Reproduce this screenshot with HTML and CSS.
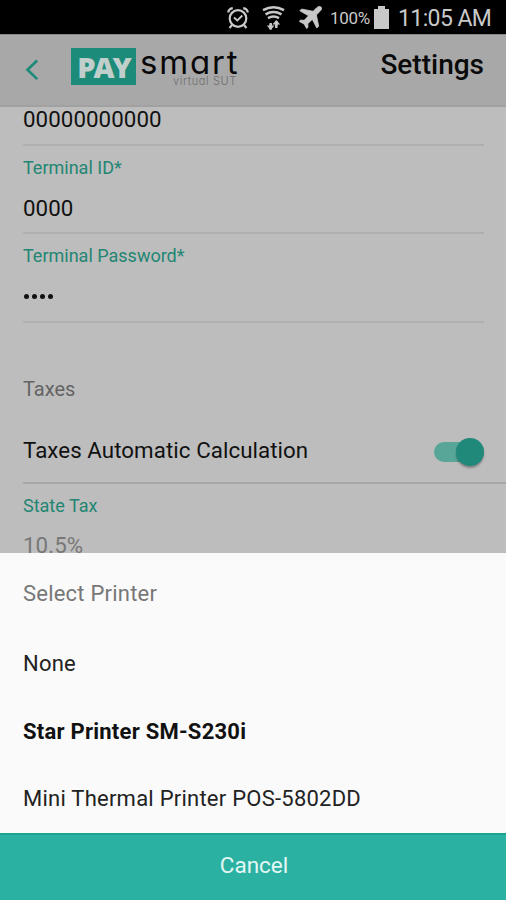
FILE: index.html
```html
<!DOCTYPE html>
<html lang="en">
<head>
<meta charset="utf-8">
<title>Settings</title>
<link rel="stylesheet" href="styles.css">
</head>
<body>
<div class="screen">
  <div class="status">
    <svg class="alarm" width="22" height="24" viewBox="0 0 22 24" fill="none" stroke="#c8c8c8">
      <circle cx="11" cy="12.5" r="8.3" stroke-width="2.2"/>
      <path d="M1.2 6.5C1.5 4.2 3.2 2.6 5.8 2.2M20.8 6.5C20.5 4.2 18.8 2.6 16.2 2.2M5 19l-2.500 3M17 19l2.500 3" stroke-width="2.2"/>
      <path d="M7 11.500l3.300 3 5-5" stroke-width="1.800"/>
    </svg>
    <svg class="wifi" width="23" height="26" viewBox="0 0 23 26" fill="none" stroke="#c8c8c8">
      <path d="M1 5.200Q11.500-.5 22 5.200M3.500 9.300Q11.500 4.700 19.500 9.300M6 13.200Q11.500 10 17 13.200" stroke-width="2.500"/>
      <path d="M8.700 24v-6M14.300 17v6" stroke-width="2.400"/>
      <path d="M8.700 19v5.500M14.300 16v5" stroke-width="2.400"/>
      <path d="M4.800 20.500l3.900 4.500 3.900-4.500zM10.400 19.500l3.900-4.500 3.900 4.500z" fill="#c8c8c8" stroke="none"/>
    </svg>
    <svg class="plane" width="23" height="23" viewBox="0 0 23 23">
      <path d="M22 1c-1.300-1.200-3.200-.4-4.300.7l-3.600 3.600L2.600 3 .8 4.800l8.700 5-4.300 4.500-3.800-.2-1 1.400 4.700 2.500 2.500 4.500 1.400-1.200-.2-3.600 4.500-4.300 4.500 8.600 1.900-1.800-2.300-11.300 3.600-3.600C22.400 4 23.200 2.200 22 1z" fill="#c8c8c8" stroke="#c8c8c8" stroke-width=".8"/>
    </svg>
    <span class="percent">100%</span>
    <svg class="battery" width="15" height="23" viewBox="0 0 15 23"><path d="M0 3h4V0h7v3h4v20H0z" fill="#c8c8c8"/></svg>
    <span class="clock">11:05 AM</span>
  </div>
  <header class="bar">
    <svg class="back" width="14" height="22" viewBox="0 0 14 22"><path d="M12.200 1.500L2.500 10.800l9.700 9.300" fill="none" stroke="#1d8b79" stroke-width="2.700"/></svg>
    <div class="logo">
      <span class="pay">PAY</span>
      <div class="words"><span class="smart">smart</span><span class="virtual">virtual SUT</span></div>
    </div>
    <h1 class="title">Settings</h1>
  </header>
  <main class="form">
    <div class="field first"><span class="value">00000000000</span></div>
    <div class="field"><span class="label">Terminal ID*</span><span class="value">0000</span></div>
    <div class="field last"><span class="label">Terminal Password*</span>
      <span class="dots"><i></i><i></i><i></i><i></i></span></div>
    <h2 class="section">Taxes</h2>
    <div class="toggle-row"><span class="value calc">Taxes Automatic Calculation</span><span class="switch"><span class="knob"></span></span></div>
    <div class="field"><span class="label">State Tax</span><span class="value muted">10.5%</span></div>
  </main>
  <section class="sheet">
    <h2 class="sheet-title">Select Printer</h2>
    <div class="option">None</div>
    <div class="option selected">Star Printer SM-S230i</div>
    <div class="option">Mini Thermal Printer POS-5802DD</div>
  </section>
  <div class="cancel">Cancel</div>
</div>
</body>
</html>
```
FILE: styles.css
```css
* { box-sizing: border-box; }
body { margin: 0; font-family: Roboto, sans-serif; }
h1, h2 { margin: 0; font-weight: 400; }
svg { display: block; flex: none; }
.screen { width: 506px; height: 900px; display: flex; flex-direction: column; overflow: hidden; }

.status { height: 35px; flex: none; background: #000; color: #c8c8c8; display: flex; align-items: flex-start; padding-left: 227px; white-space: nowrap; border-bottom: 1px solid #868686; }
.alarm { margin-top: 6px; }
.wifi { margin: 5px 0 0 13px; }
.plane { margin: 6px 0 0 14px; }
.percent { margin-left: 8px; width: 41px; font-size: 17px; line-height: 36px; letter-spacing: -.3px; }
.battery { margin: 6px 0 0 3px; }
.clock { margin-left: 9px; font-size: 23px; line-height: 38px; letter-spacing: -.6px; }

.bar { height: 72px; flex: none; background: #a8a8a8; display: flex; align-items: flex-start; padding: 0 22px 0 25px; border-bottom: 2px solid #a1a1a1; }
.back { margin-top: 24px; }
.logo { display: flex; margin: 13px 0 0 32px; }
.pay { width: 65px; height: 37px; background: #1d8b79; color: #c1cfcc; font: 800 29px/37px "Open Sans", sans-serif; letter-spacing: -2px; text-align: center; }
.words { display: flex; flex-direction: column; width: 104px; padding-left: 4px; font-feature-settings: "cv11"; }
.smart { font: 400 33px/28px Inter, sans-serif; letter-spacing: 1.800px; color: #080808; height: 27px; }
.virtual { font: 300 11px/12px Inter, sans-serif; color: #6d6d6d; align-self: flex-end; margin-right: 3px; letter-spacing: .65px; }
.smart, .virtual { font-feature-settings: "cv11"; }
.title { margin-left: auto; font-size: 28px; font-weight: 500; line-height: 59px; color: #0a0a0a; }

.form { height: 446px; flex: none; background: #bdbdbd; padding-left: 23px; overflow: hidden; }
.field { height: 88px; margin-right: 22px; padding-top: 10px; border-bottom: 2px solid #b0b0b0; display: flex; flex-direction: column; }
.first { height: 39px; padding-top: 0; }
.last { height: 89px; }
.label { font-size: 18px; line-height: 24px; color: #228673; }
.value { font-size: 22.300px; line-height: 28px; color: #111; margin-top: 14px; letter-spacing: .07px; }
.first .value { margin-top: -2px; }
.dots { display: flex; gap: 3px; margin: 26px 0 0 1px; }
.dots i { width: 5px; height: 5px; border-radius: 50%; background: #111; }
.section { margin-top: 53px; font-size: 20px; line-height: 26px; color: #646464; }
.toggle-row { height: 82px; display: flex; justify-content: space-between; padding: 21px 22px 0 0; border-bottom: 2px solid #a8a8a8; }
.toggle-row .value { margin-top: 13px; }
.switch { width: 50px; height: 20px; margin-top: 19px; border-radius: 10px; background: #58a698; display: flex; justify-content: flex-end; align-items: center; }
.knob { width: 28px; height: 28px; border-radius: 50%; background: #20897a; box-shadow: 0 2px 2px rgba(0,0,0,.3); }
.muted { color: #777; margin-top: 13px; }

.sheet { height: 280px; flex: none; background: #fafafa; padding: 7px 23px 0; color: #222; }
.sheet-title { font-size: 22px; line-height: 68px; color: #777; letter-spacing: .22px; }
.option { height: 67.500px; font-size: 22px; line-height: 72px; letter-spacing: .24px; }
.selected { font-weight: 700; color: #111; }
.cancel { height: 67px; flex: none; background: #2bb1a2; border-top: 2px solid #1aa391; color: #e3f8f4; font-size: 22.500px; line-height: 61px; text-align: center; padding-left: 2px; }
```
